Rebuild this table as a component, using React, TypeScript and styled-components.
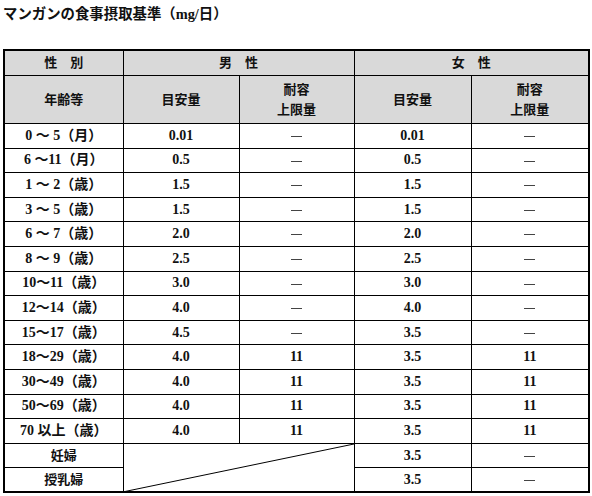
import styled, { createGlobalStyle } from "styled-components";

const GlobalStyle = createGlobalStyle`
  html, body {
    margin: 0;
    padding: 0;
    background: #ffffff;
  }
  body {
    font-family: "Liberation Serif", "Noto Sans CJK JP", serif;
    color: #111;
  }
`;

const SPage = styled.main`
  width: 592px;
  height: 496px;
  padding: 4px 0 0 3px;
  box-sizing: border-box;
  overflow: hidden;
`;

const STitle = styled.h1`
  margin: 0 0 25px;
  font-size: 14.4px;
  line-height: 20px;
  font-weight: 700;
  letter-spacing: 0;
`;

const STable = styled.table`
  width: 585px;
  border-collapse: collapse;
  table-layout: fixed;
  border: 2px solid #000;
  font-size: 13px;
  font-weight: 700;
`;

const SHeadCell = styled.th<{ $tall?: boolean }>`
  background: #d9d9d9;
  border: 1px solid #000;
  height: ${({ $tall }) => ($tall ? "47px" : "24px")};
  padding: 0;
  text-align: center;
  font-weight: 700;
  line-height: 20px;
`;

const SRow = styled.tr`
  height: 24.6px;
`;

const SCell = styled.td`
  border: 1px solid #000;
  padding: 0;
  text-align: center;
  font-size: 14px;
  line-height: 20px;
  white-space: nowrap;
`;

const SLabel = styled.span`
  font-size: 13px;
`;

const SSlashCell = styled.td`
  border: 1px solid #000;
  padding: 0;
  position: relative;
`;

const SSlash = styled.svg`
  position: absolute;
  inset: 0;
  width: 100%;
  height: 100%;
  display: block;
`;

const SDash = styled.span`
  display: inline-block;
  width: 11px;
  height: 1px;
  background: #444;
  vertical-align: middle;
`;

type Row = { age: string; mAi: string; mUl: string; fAi: string; fUl: string };

const rows: Row[] = [
  { age: "0 ～ 5（月）", mAi: "0.01", mUl: "", fAi: "0.01", fUl: "" },
  { age: "6 ～11（月）", mAi: "0.5", mUl: "", fAi: "0.5", fUl: "" },
  { age: "1 ～ 2（歳）", mAi: "1.5", mUl: "", fAi: "1.5", fUl: "" },
  { age: "3 ～ 5（歳）", mAi: "1.5", mUl: "", fAi: "1.5", fUl: "" },
  { age: "6 ～ 7（歳）", mAi: "2.0", mUl: "", fAi: "2.0", fUl: "" },
  { age: "8 ～ 9（歳）", mAi: "2.5", mUl: "", fAi: "2.5", fUl: "" },
  { age: "10～11（歳）", mAi: "3.0", mUl: "", fAi: "3.0", fUl: "" },
  { age: "12～14（歳）", mAi: "4.0", mUl: "", fAi: "4.0", fUl: "" },
  { age: "15～17（歳）", mAi: "4.5", mUl: "", fAi: "3.5", fUl: "" },
  { age: "18～29（歳）", mAi: "4.0", mUl: "11", fAi: "3.5", fUl: "11" },
  { age: "30～49（歳）", mAi: "4.0", mUl: "11", fAi: "3.5", fUl: "11" },
  { age: "50～69（歳）", mAi: "4.0", mUl: "11", fAi: "3.5", fUl: "11" },
  { age: "70 以上（歳）", mAi: "4.0", mUl: "11", fAi: "3.5", fUl: "11" },
];

const Value = ({ v }: { v: string }) => (v ? <>{v}</> : <SDash />);

const App = () => {
  return (
    <>
      <GlobalStyle />
      <SPage>
        <STitle>マンガンの食事摂取基準（mg/日）</STitle>
        <STable>
          <colgroup>
            <col style={{ width: 119 }} />
            <col style={{ width: 116 }} />
            <col style={{ width: 115 }} />
            <col style={{ width: 117 }} />
            <col style={{ width: 118 }} />
          </colgroup>
          <thead>
            <tr>
              <SHeadCell>性　別</SHeadCell>
              <SHeadCell colSpan={2}>男　性</SHeadCell>
              <SHeadCell colSpan={2}>女　性</SHeadCell>
            </tr>
            <tr>
              <SHeadCell $tall>年齢等</SHeadCell>
              <SHeadCell $tall>目安量</SHeadCell>
              <SHeadCell $tall>
                耐容
                <br />
                上限量
              </SHeadCell>
              <SHeadCell $tall>目安量</SHeadCell>
              <SHeadCell $tall>
                耐容
                <br />
                上限量
              </SHeadCell>
            </tr>
          </thead>
          <tbody>
            {rows.map((r) => (
              <SRow key={r.age}>
                <SCell>{r.age}</SCell>
                <SCell>{r.mAi}</SCell>
                <SCell>
                  <Value v={r.mUl} />
                </SCell>
                <SCell>{r.fAi}</SCell>
                <SCell>
                  <Value v={r.fUl} />
                </SCell>
              </SRow>
            ))}
            <SRow>
              <SCell>
                <SLabel>妊婦</SLabel>
              </SCell>
              <SSlashCell colSpan={2} rowSpan={2}>
                <SSlash viewBox="0 0 100 100" preserveAspectRatio="none">
                  <line
                    x1="0"
                    y1="100"
                    x2="100"
                    y2="0"
                    stroke="#000"
                    strokeWidth="1"
                    vectorEffect="non-scaling-stroke"
                  />
                </SSlash>
              </SSlashCell>
              <SCell>3.5</SCell>
              <SCell>
                <SDash />
              </SCell>
            </SRow>
            <SRow>
              <SCell>
                <SLabel>授乳婦</SLabel>
              </SCell>
              <SCell>3.5</SCell>
              <SCell>
                <SDash />
              </SCell>
            </SRow>
          </tbody>
        </STable>
      </SPage>
    </>
  );
};

export default App;
